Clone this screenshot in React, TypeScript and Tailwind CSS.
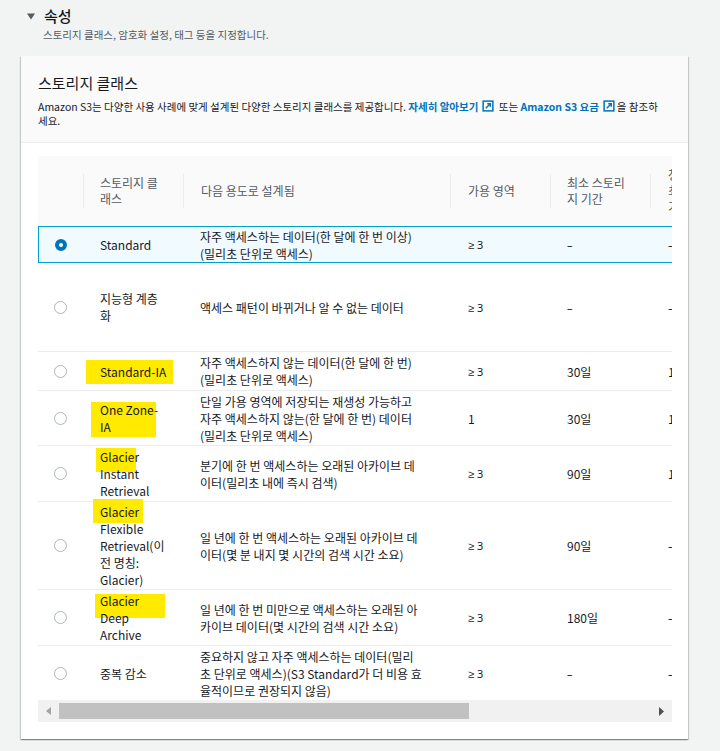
import React from "react";

type Row = {
  name: string[];
  desc: string[];
  az: string;
  min: string;
  c6: string;
  h: string;
  selected?: boolean;
  hl?: string;
};

const rows: Row[] = [
  {
    name: ["Standard"],
    desc: ["자주 액세스하는 데이터(한 달에 한 번 이상)", "(밀리초 단위로 액세스)"],
    az: "3",
    min: "–",
    c6: "–",
    h: "h-[37px]",
    selected: true,
  },
  {
    name: ["지능형 계층", "화"],
    desc: ["액세스 패턴이 바뀌거나 알 수 없는 데이터"],
    az: "3",
    min: "–",
    c6: "–",
    h: "h-[89px]",
  },
  {
    name: ["Standard-IA"],
    desc: ["자주 액세스하지 않는 데이터(한 달에 한 번)", "(밀리초 단위로 액세스)"],
    az: "3",
    min: "30일",
    c6: "128KB",
    h: "h-[39px]",
    hl: "left-[-14px] top-[-2.5px] w-[87px] h-[24px]",
  },
  {
    name: ["One Zone-", "IA"],
    desc: [
      "단일 가용 영역에 저장되는 재생성 가능하고",
      "자주 액세스하지 않는(한 달에 한 번) 데이터",
      "(밀리초 단위로 액세스)",
    ],
    az: "1",
    min: "30일",
    c6: "128KB",
    h: "h-[55px]",
    hl: "left-[-9px] top-[1px] w-[65px] h-[35px]",
  },
  {
    name: ["Glacier", "Instant", "Retrieval"],
    desc: ["분기에 한 번 액세스하는 오래된 아카이브 데", "이터(밀리초 내에 즉시 검색)"],
    az: "3",
    min: "90일",
    c6: "128KB",
    h: "h-[56px]",
    hl: "left-[-4px] top-[0px] w-[40px] h-[24px]",
  },
  {
    name: ["Glacier", "Flexible", "Retrieval(이", "전 명칭:", "Glacier)"],
    desc: ["일 년에 한 번 액세스하는 오래된 아카이브 데", "이터(몇 분 내지 몇 시간의 검색 시간 소요)"],
    az: "3",
    min: "90일",
    c6: "–",
    h: "h-[88px]",
    hl: "left-[-7px] top-[-4px] w-[50px] h-[24px]",
  },
  {
    name: ["Glacier", "Deep", "Archive"],
    desc: ["일 년에 한 번 미만으로 액세스하는 오래된 아", "카이브 데이터(몇 시간의 검색 시간 소요)"],
    az: "3",
    min: "180일",
    c6: "–",
    h: "h-[56px]",
    hl: "left-[-5px] top-[2px] w-[70px] h-[24px]",
  },
  {
    name: ["중복 감소"],
    desc: [
      "중요하지 않고 자주 액세스하는 데이터(밀리",
      "초 단위로 액세스)(S3 Standard가 더 비용 효",
      "율적이므로 권장되지 않음)",
    ],
    az: "3",
    min: "–",
    c6: "–",
    h: "h-[54px]",
  },
];

function ExtIcon() {
  return (
    <svg
      width="12"
      height="12"
      viewBox="0 0 16 16"
      className="inline-block align-[-1px] ml-[4px] mr-[2px]"
      fill="none"
      stroke="#0073bb"
      strokeWidth="2"
    >
      <rect x="1.5" y="1.5" width="13" height="13" />
      <path d="M5 11L11 5" />
      <path d="M7 5h4v4" />
    </svg>
  );
}

function Lines({ lines }: { lines: string[] }) {
  return (
    <>
      {lines.map((l, i) => (
        <div key={i} className="whitespace-nowrap">
          {l}
        </div>
      ))}
    </>
  );
}

function Az({ v }: { v: string }) {
  if (v === "1") return <span>1</span>;
  return (
    <span className="font-['Noto_Sans',sans-serif] text-[11px]">
      ≥ {v}
    </span>
  );
}

function Dash({ v }: { v: string }) {
  if (v === "–")
    return <span className="font-['Noto_Sans',sans-serif] text-[11px]">–</span>;
  return <span>{v}</span>;
}

export default function App() {
  return (
    <div className="w-[720px] min-h-[751px] bg-[#f2f3f3] font-['Noto_Sans_CJK_KR','Noto_Sans',sans-serif] text-[#16191f] overflow-hidden">
      <div className="pt-[6px] pl-[27px] flex items-center gap-[9px] h-[26px]">
        <svg width="8" height="7" viewBox="0 0 8 7">
          <path d="M0 0.5h8L4 6.5z" fill="#545b64" />
        </svg>
        <span className="text-[15px] leading-[20px] font-medium">속성</span>
      </div>
      <div className="pl-[43px] text-[10.5px] leading-[14px] h-[16px] mt-[2px] text-[#545b64]">
        스토리지 클래스, 암호화 설정, 태그 등을 지정합니다.
      </div>

      <div className="mt-[12px] ml-[21px] w-[667px] bg-white shadow-[0_1px_1px_0_rgba(0,28,36,0.3),1px_1px_1px_0_rgba(0,28,36,0.15),-1px_1px_1px_0_rgba(0,28,36,0.15)]">
        <div className="bg-[#fafafa] border-b border-[#eaeded] pl-[17px] pr-[16px] pt-[17px] pb-[14px]">
          <div className="text-[15px] leading-[20px]">스토리지 클래스</div>
          <div className="mt-[7px] text-[10.5px] leading-[14px] text-[#16191f]">
            <div className="whitespace-nowrap">
              Amazon S3는 다양한 사용 사례에 맞게 설계된 다양한 스토리지 클래스를 제공합니다.{" "}
              <span className="text-[#0073bb] font-bold">자세히 알아보기</span>
              <ExtIcon />
              {" "}또는 <span className="text-[#0073bb] font-bold">Amazon S3 요금</span>
              <ExtIcon />을 참조하
            </div>
            <div>세요.</div>
          </div>
        </div>

        <div className="pt-[13px] pb-[17px] pl-[17px] pr-[16px]">
          <div className="w-[634px] overflow-hidden">
            <div className="w-[750px] text-[12px]">
              {/* header */}
              <div className="flex h-[70px] bg-[#fafafa] text-[#545b64] leading-[16px]">
                <div className="w-[45px] shrink-0" />
                <div className="w-[100px] shrink-0 flex items-center">
                  <div className="h-[34px] w-full border-l border-[#eaeded] pl-[16px] pr-[19px] flex items-center">
                    스토리지 클래스
                  </div>
                </div>
                <div className="w-[267px] shrink-0 flex items-center">
                  <div className="h-[34px] w-full border-l border-[#eaeded] pl-[17px] flex items-center">
                    다음 용도로 설계됨
                  </div>
                </div>
                <div className="w-[100px] shrink-0 flex items-center">
                  <div className="h-[34px] w-full border-l border-[#eaeded] pl-[17px] flex items-center">
                    가용 영역
                  </div>
                </div>
                <div className="w-[100px] shrink-0 flex items-center">
                  <div className="h-[34px] w-full border-l border-[#eaeded] pl-[16px] pr-[19px] flex items-center">
                    최소 스토리지 기간
                  </div>
                </div>
                <div className="w-[138px] shrink-0 flex items-center">
                  <div className="h-[34px] w-full border-l border-[#eaeded] pl-[17px] pr-[56px] flex items-center">
                    청구 가능한 최소 객체 크기
                  </div>
                </div>
              </div>

              {rows.map((r, i) => (
                <div
                  key={i}
                  className={`flex ${r.h} leading-[17px] ${
                    r.selected
                      ? "bg-[#f1faff] shadow-[inset_0_0_0_1px_#00a1c9]"
                      : i < rows.length - 1
                      ? "border-b border-[#eaeded]"
                      : ""
                  }`}
                >
                  <div className="w-[45px] shrink-0 flex items-center justify-center">
                    {r.selected ? (
                      <div className="w-[12px] h-[12px] rounded-full border-[4px] border-[#0073bb] bg-white" />
                    ) : (
                      <div className="w-[13px] h-[13px] rounded-full border border-[#aab7b8] bg-white" />
                    )}
                  </div>
                  <div className="w-[100px] shrink-0 flex items-center pl-[17px]">
                    <div className="relative">
                      {r.hl && <div className={`absolute bg-[#ffea00] ${r.hl}`} />}
                      <div className="relative">
                        <Lines lines={r.name} />
                      </div>
                    </div>
                  </div>
                  <div className="w-[267px] shrink-0 flex flex-col justify-center pl-[17px]">
                    <Lines lines={r.desc} />
                  </div>
                  <div className="w-[100px] shrink-0 flex items-center pl-[18px]">
                    <Az v={r.az} />
                  </div>
                  <div className="w-[100px] shrink-0 flex items-center pl-[17px]">
                    <Dash v={r.min} />
                  </div>
                  <div className="w-[138px] shrink-0 flex items-center pl-[18px]">
                    <Dash v={r.c6} />
                  </div>
                </div>
              ))}
            </div>
          </div>

          {/* scrollbar */}
          <div className="w-[634px] h-[22px] bg-[#f1f1f1] flex items-center">
            <div className="w-[21px] h-full flex items-center justify-center">
              <svg width="5" height="8" viewBox="0 0 5 8">
                <path d="M5 0v8L0 4z" fill="#a3a3a3" />
              </svg>
            </div>
            <div className="w-[410px] h-[16px] bg-[#c1c1c1]" />
            <div className="flex-1" />
            <div className="w-[21px] h-full flex items-center justify-center">
              <svg width="5" height="9" viewBox="0 0 5 9">
                <path d="M0 0v9l5-4.5z" fill="#505050" />
              </svg>
            </div>
          </div>
        </div>
      </div>
    </div>
  );
}
